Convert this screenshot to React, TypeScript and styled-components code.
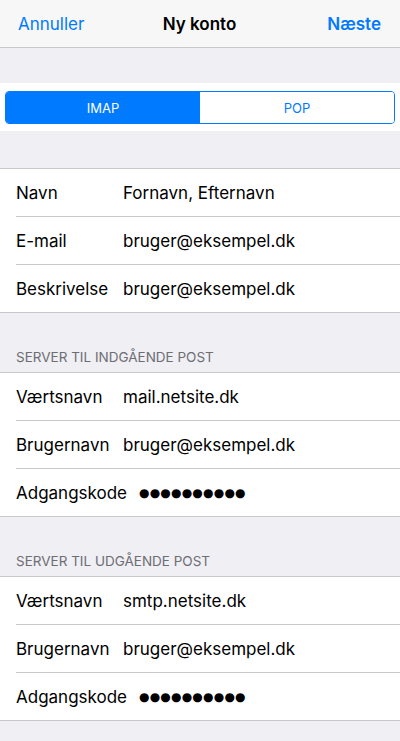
import styled, { createGlobalStyle } from "styled-components";

const GlobalStyle = createGlobalStyle`
  html, body {
    margin: 0;
    padding: 0;
    background: #efeff4;
  }
  body {
    font-family: "Inter", "Roboto", "Liberation Sans", sans-serif;
    -webkit-font-smoothing: antialiased;
  }
`

const Page = styled.div`
  width: 400px;
  min-height: 741px;
  background: #efeff4;
`

const NavBar = styled.div`
  height: 47px;
  background: #f7f7f8;
  border-bottom: 1px solid #c8c7cc;
  display: grid;
  grid-template-columns: 1fr auto 1fr;
  align-items: center;
  padding: 0 19px 0 18px;
`

const NavButton = styled.span<{ $align: "left" | "right"; $bold?: boolean }>`
  color: #007aff;
  font-size: 17px;
  font-weight: ${p => (p.$bold ? 600 : 400)};
  text-align: ${p => p.$align};
`

const NavTitle = styled.span`
  font-size: 17px;
  font-weight: 600;
  color: #000;
`

const Spacer = styled.div<{ $h: number }>`
  height: ${p => p.$h}px;
`

const SegmentWrap = styled.div`
  background: #fff;
  height: 48px;
  padding: 0 5px;
  display: flex;
  align-items: center;
`

const Segment = styled.div`
  flex: 1;
  height: 33px;
  margin-top: 1px;
  display: flex;
  border: 1px solid #007aff;
  border-radius: 4px;
  overflow: hidden;
  box-sizing: border-box;
`

const SegmentItem = styled.div<{ $active?: boolean }>`
  flex: 1;
  display: flex;
  align-items: center;
  justify-content: center;
  font-size: 13px;
  background: ${p => (p.$active ? "#007aff" : "#fff")};
  color: ${p => (p.$active ? "#fff" : "#007aff")};
`

const Group = styled.div`
  background: #fff;
  border-top: 1px solid #c8c7cc;
  border-bottom: 1px solid #c8c7cc;
`

const Row = styled.div`
  display: flex;
  align-items: center;
  height: 47px;
  margin-left: 16px;
  border-bottom: 1px solid #c8c7cc;
  font-size: 17px;
  color: #000;

  &:last-child {
    border-bottom: none;
  }
`

const Label = styled.span`
  min-width: 107px;
  flex-shrink: 0;
  white-space: nowrap;
`

const Value = styled.span<{ $secret?: boolean }>`
  white-space: nowrap;
  ${p => p.$secret && `
    margin-left: 12px;
    font-family: "DejaVu Sans", sans-serif;
    font-size: 12px;
    letter-spacing: 0.2px;
  `}
`

const SectionHeader = styled.div`
  height: 59px;
  box-sizing: border-box;
  padding: 0 16px 7px;
  display: flex;
  align-items: flex-end;
  font-size: 13.5px;
  color: #6d6d72;
  text-transform: uppercase;
`

interface IField {
  label: string
  value: string
  secret?: boolean
}

const account: IField[] = [
  { label: "Navn", value: "Fornavn, Efternavn" },
  { label: "E-mail", value: "bruger@eksempel.dk" },
  { label: "Beskrivelse", value: "bruger@eksempel.dk" },
]

const incoming: IField[] = [
  { label: "Værtsnavn", value: "mail.netsite.dk" },
  { label: "Brugernavn", value: "bruger@eksempel.dk" },
  { label: "Adgangskode", value: "●●●●●●●●●●", secret: true },
]

const outgoing: IField[] = [
  { label: "Værtsnavn", value: "smtp.netsite.dk" },
  { label: "Brugernavn", value: "bruger@eksempel.dk" },
  { label: "Adgangskode", value: "●●●●●●●●●●", secret: true },
]

const FieldGroup = ({ fields }: { fields: IField[] }) => (
  <Group>
    {fields.map(f => (
      <Row key={f.label}>
        <Label>{f.label}</Label>
        <Value $secret={f.secret}>{f.value}</Value>
      </Row>
    ))}
  </Group>
)

export default function App() {
  return (
    <Page>
      <GlobalStyle />
      <NavBar>
        <NavButton $align="left">Annuller</NavButton>
        <NavTitle>Ny konto</NavTitle>
        <NavButton $align="right" $bold>Næste</NavButton>
      </NavBar>
      <Spacer $h={35} />
      <SegmentWrap>
        <Segment>
          <SegmentItem $active>IMAP</SegmentItem>
          <SegmentItem>POP</SegmentItem>
        </Segment>
      </SegmentWrap>
      <Spacer $h={37} />
      <FieldGroup fields={account} />
      <SectionHeader>Server til indgående post</SectionHeader>
      <FieldGroup fields={incoming} />
      <SectionHeader>Server til udgående post</SectionHeader>
      <FieldGroup fields={outgoing} />
    </Page>
  )
}
